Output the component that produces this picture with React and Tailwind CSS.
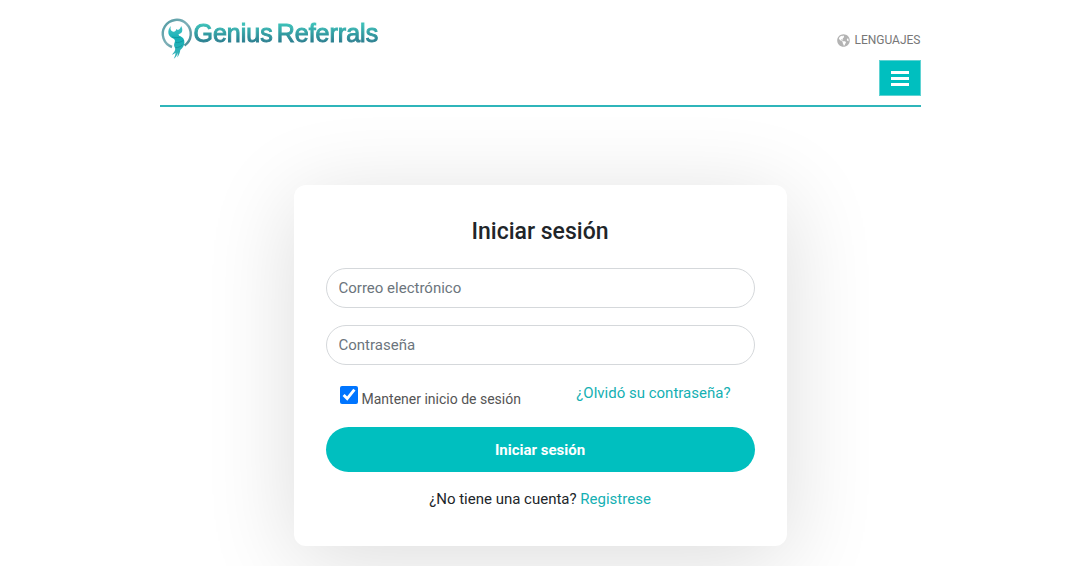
import React from "react";
import { FaGlobeAmericas } from "react-icons/fa";

function Logo() {
  return (
    <a href="#" className="flex items-start" aria-label="Genius Referrals">
      <svg viewBox="0 0 34 44" className="h-11 w-[34px]" fill="none" aria-hidden="true">
        <defs>
          <linearGradient id="ring" x1="0" y1="0" x2="1" y2="1">
            <stop offset="0" stopColor="#4f9aa2" />
            <stop offset="0.5" stopColor="#7fb0b8" />
            <stop offset="1" stopColor="#3f8791" />
          </linearGradient>
          <linearGradient id="genie" x1="0" y1="0" x2="0" y2="1">
            <stop offset="0" stopColor="#45c2c4" />
            <stop offset="0.4" stopColor="#14b0b6" />
            <stop offset="1" stopColor="#3fb2b9" />
          </linearGradient>
        </defs>
        <path d="M12 31A14 14 0 1 1 24.500 29.500" stroke="url(#ring)" strokeWidth="2.4" />
        <path
          d="M11 10c-2 2-3 4.500-2.600 7.200.4 2.600 2.200 4 4.300 5 2.200 1 2.700 2.200 2 4-.8 1.900-.9 3.700.1 5.400.6 1.100.5 2.400-.2 3.600-.7 1.300-1.700 2.400-2.800 3.500 1.500-.4 2.700-1 3.700-1.900-.1 1.900-.6 3.800-1.700 5.900 2.200-1.600 3.500-3.700 3.900-6 .2 1.500 0 3-.5 4.700 1.900-2.300 2.800-4.700 3.100-7.400 2.300-1.900 4-4.300 4.100-7.400.1-3.200-1.500-5.200-4-6.300-1.200-.5-1.900-1.300-1.700-2.400 1.800-.2 3.200-1.200 3.500-3 .3-1.700-.2-3.400-1-4.900-.8 2.200-1.800 3.600-3.400 3.900l-1.500-.8c-.4 1.900-1.400 2.900-2.900 2.700-2-.3-3-2-2.900-3.800z"
          fill="url(#genie)"
        />
        <path d="M12 21c3 .8 6 .8 8.500 0M15.500 26.500c2.500.4 5.500-.4 8-2M15.500 31.500c2.500.2 4.500-.6 7-2.500" stroke="#0d8f98" strokeWidth="0.7" />
      </svg>
      <span className="flex gap-1 bg-linear-to-b from-[#3cc0b8] from-25% to-[#2a7d8e] to-80% bg-clip-text pt-px font-['Liberation_Sans',sans-serif] text-[25px] leading-8 text-transparent [-webkit-text-stroke:1px_transparent]">
        <span>Genius</span>
        <span>Referrals</span>
      </span>
    </a>
  );
}

function Header() {
  return (
    <header className="flex justify-between border-b-2 border-[#2fb5ba] pt-4 pb-[9px]">
      <Logo />
      <div className="flex flex-col items-end gap-3 pt-4">
        <a href="#" className="flex items-center gap-1 text-xs leading-4 text-[#777]">
          <FaGlobeAmericas className="size-[13px] text-[#b3b3b3]" aria-hidden="true" />
          LENGUAJES
        </a>
        <button
          type="button"
          aria-label="Menú"
          className="flex h-9 w-[42px] items-center justify-center border border-[#5fd3d3] bg-[#00bfbf] text-white"
        >
          <svg viewBox="0 0 18 15" className="h-[15px] w-[18px]" fill="currentColor" aria-hidden="true">
            <path d="M0 0h18v3H0zM0 6h18v3H0zM0 12h18v3H0z" />
          </svg>
        </button>
      </div>
    </header>
  );
}

function Field({ label, type }) {
  return (
    <input
      type={type}
      aria-label={label}
      placeholder={label}
      className="mb-[17px] block h-10 w-full rounded-full border border-[#d5d8db] bg-white px-3 text-[15px] text-[#495057] placeholder:text-[#6c757d]"
    />
  );
}

export default function App() {
  return (
    <div className="overflow-x-hidden bg-white px-4 pb-5 font-[Roboto,sans-serif] text-[15px] leading-6 text-[#212529]">
      <div className="mx-auto max-w-[761px]">
        <Header />
        <main className="mx-auto mt-[78px] max-w-[493px] rounded-xl bg-white px-8 pt-8 pb-[35px] shadow-[0_14px_90px_rgba(0,0,0,0.14)]">
          <h1 className="mb-[21px] text-center text-[23px] leading-[30px] font-medium">Iniciar sesión</h1>
          <form onSubmit={(e) => e.preventDefault()}>
            <Field label="Correo electrónico" type="email" />
            <Field label="Contraseña" type="password" />
            <div className="mb-[18px] flex items-start justify-between pr-6 pl-3.5">
              <div className="flex items-center gap-1 pt-[3px]">
                <input id="remember" type="checkbox" defaultChecked className="mb-1 size-[18px]" />
                <label htmlFor="remember" className="pt-1 text-sm text-[#555]">Mantener inicio de sesión</label>
              </div>
              <a href="#" className="leading-[22px] text-[#14b0b3]">¿Olvidó su contraseña?</a>
            </div>
            <button type="submit" className="block h-[45px] w-full rounded-full bg-[#00bfbf] font-bold text-white">
              Iniciar sesión
            </button>
          </form>
          <p className="mt-[15px] text-center">
            ¿No tiene una cuenta? <a href="#" className="text-[#14b0b3]">Registrese</a>
          </p>
        </main>
      </div>
    </div>
  );
}
